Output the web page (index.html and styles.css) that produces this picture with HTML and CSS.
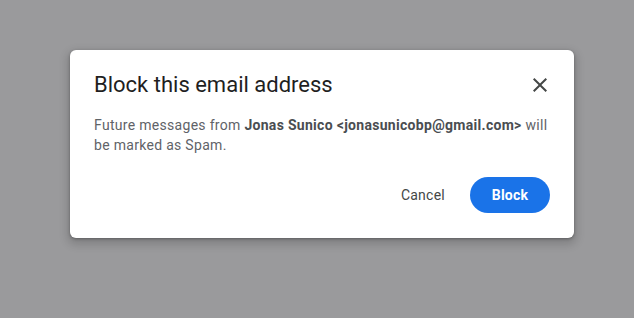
FILE: index.html
```html
<!DOCTYPE html>
<html>
<head>
<meta charset="utf-8">
<link rel="stylesheet" href="styles.css">
</head>
<body>
<div class="overlay">
  <div class="dialog">
    <div class="header">
      <h1 class="title">Block this email address</h1>
      <button class="close" aria-label="Close">
        <svg width="24" height="24" viewBox="0 0 24 24"><path d="M19 6.41 17.59 5 12 10.59 6.41 5 5 6.41 10.59 12 5 17.59 6.41 19 12 13.41 17.59 19 19 17.59 13.41 12z" fill="#444746"/></svg>
      </button>
    </div>
    <p class="body">Future messages from <b>Jonas Sunico &lt;jonasunicobp@gmail.com&gt;</b> will be marked as Spam.</p>
    <div class="actions">
      <button class="btn text">Cancel</button>
      <button class="btn primary">Block</button>
    </div>
  </div>
</div>
</body>
</html>
```
FILE: styles.css
```css
html, body { margin: 0; padding: 0; }
body { background: #9a9a9c; width: 634px; height: 318px; overflow: hidden; font-family: Roboto, "Liberation Sans", sans-serif; }
.overlay { padding: 50px 0 0 70px; }
.dialog {
  width: 504px;
  box-sizing: border-box;
  background: #fff;
  border-radius: 6px;
  box-shadow: 0 1px 3px rgba(0,0,0,0.3), 0 4px 8px 3px rgba(0,0,0,0.15);
  padding: 21px 24px 25px 24px;
}
.header { display: flex; justify-content: space-between; align-items: center; }
.title { margin: 0; font-family: Roboto, sans-serif; font-weight: 400; font-size: 22px; line-height: 28px; color: #1f1f1f; }
.close { border: 0; background: none; padding: 0; width: 24px; height: 24px; margin-right: -2px; display: flex; }
.body { margin: 16px 0 0 0; font-size: 14px; line-height: 20px; color: #5f6368; letter-spacing: 0.3px; }
.body b { font-weight: 700; color: #4a4d51; }
.actions { display: flex; justify-content: flex-end; align-items: center; gap: 13px; margin-top: 22px; }
.btn { font-family: Roboto, sans-serif; font-size: 14px; border: 0; height: 36px; border-radius: 18px; padding: 0 12px; cursor: pointer; letter-spacing: 0.25px; }
.text { background: none; color: #444746; }
.primary { background: #1a73e8; color: #fff; font-weight: 700; width: 80px; padding: 0; }
```
